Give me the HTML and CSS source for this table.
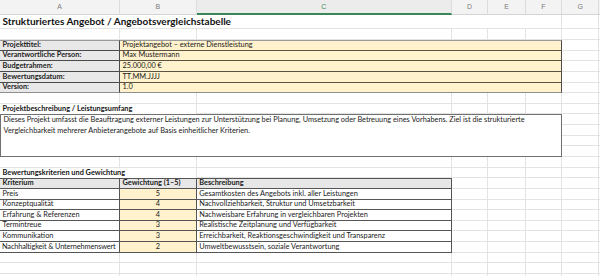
FILE: index.html
```html
<!DOCTYPE html>
<html lang="de">
<head>
<meta charset="utf-8">
<title>Angebotsvergleich</title>
<link rel="stylesheet" href="styles.css">
</head>
<body>
<div class="colhead">
  <div>A</div><div>B</div><div class="sel">C</div><div>D</div><div>E</div><div>F</div><div>G</div><div></div>
</div>
<div class="sheet">
  <!-- row 1 -->
  <div class="title span6">Strukturiertes Angebot / Angebotsvergleichstabelle</div><span></span><span></span>
  <!-- row 2 -->
  <span></span><span></span><span></span><span></span><span></span><span></span><span></span><span></span>
  <!-- row 3-7 -->
  <div class="lbl first">Projekttitel:</div><div class="val span5 first">Projektangebot – externe Dienstleistung</div><span></span><span></span>
  <div class="lbl">Verantwortliche Person:</div><div class="val span5">Max Mustermann</div><span></span><span></span>
  <div class="lbl">Budgetrahmen:</div><div class="val span5">25.000,00 €</div><span></span><span></span>
  <div class="lbl">Bewertungsdatum:</div><div class="val span5">TT.MM.JJJJ</div><span></span><span></span>
  <div class="lbl last">Version:</div><div class="val span5 last">1.0</div><span></span><span></span>
  <!-- row 8 -->
  <span></span><span></span><span></span><span></span><span></span><span></span><span></span><span></span>
  <!-- row 9 -->
  <div class="head span2">Projektbeschreibung / Leistungsumfang</div><span></span><span></span><span></span><span></span><span></span><span></span>
  <!-- rows 10-13 -->
  <div class="desc">Dieses Projekt umfasst die Beauftragung externer Leistungen zur Unterstützung bei Planung, Umsetzung oder Betreuung eines Vorhabens. Ziel ist die strukturierte<br>Vergleichbarkeit mehrerer Anbieterangebote auf Basis einheitlicher Kriterien.</div><span></span><span></span>
  <span></span><span></span>
  <span></span><span></span>
  <span></span><span></span>
  <!-- row 14 -->
  <span></span><span></span><span></span><span></span><span></span><span></span><span></span><span></span>
  <!-- row 15 -->
  <div class="head span2">Bewertungskriterien und Gewichtung</div><span></span><span></span><span></span><span></span><span></span><span></span>
  <!-- row 16 -->
  <div class="th">Kriterium</div><div class="th mid">Gewichtung (1–5)</div><div class="th end">Beschreibung</div><span></span><span></span><span></span><span></span><span></span>
  <!-- rows 17-22 -->
  <div class="td">Preis</div><div class="td w">5</div><div class="td end">Gesamtkosten des Angebots inkl. aller Leistungen</div><span></span><span></span><span></span><span></span><span></span>
  <div class="td">Konzeptqualität</div><div class="td w">4</div><div class="td end">Nachvollziehbarkeit, Struktur und Umsetzbarkeit</div><span></span><span></span><span></span><span></span><span></span>
  <div class="td">Erfahrung &amp; Referenzen</div><div class="td w">4</div><div class="td end">Nachweisbare Erfahrung in vergleichbaren Projekten</div><span></span><span></span><span></span><span></span><span></span>
  <div class="td">Termintreue</div><div class="td w">3</div><div class="td end">Realistische Zeitplanung und Verfügbarkeit</div><span></span><span></span><span></span><span></span><span></span>
  <div class="td">Kommunikation</div><div class="td w">3</div><div class="td end">Erreichbarkeit, Reaktionsgeschwindigkeit und Transparenz</div><span></span><span></span><span></span><span></span><span></span>
  <div class="td tight">Nachhaltigkeit &amp; Unternehmenswert</div><div class="td w">2</div><div class="td end">Umweltbewusstsein, soziale Verantwortung</div><span></span><span></span><span></span><span></span><span></span>
  <!-- rows 23-25 -->
  <span></span><span></span><span></span><span></span><span></span><span></span><span></span><span></span>
  <span></span><span></span><span></span><span></span><span></span><span></span><span></span><span></span>
  <span></span><span></span><span></span><span></span><span></span><span></span><span></span><span></span>
</div>
</body>
</html>
```
FILE: styles.css
```css
html, body {
  margin: 0;
  padding: 0;
  background: #ffffff;
  overflow: hidden;
}
body {
  width: 600px;
  height: 276px;
  font-family: "Lato", "Liberation Sans", sans-serif;
  font-size: 7.35px;
  color: #1a1a1a;
}
.colhead, .sheet {
  display: grid;
  grid-template-columns: 120px 76.7px 255.3px 36.3px 37.4px 36.6px 36.7px 20px;
}
.colhead {
  height: 14.5px;
  background: #f3f3f3;
}
.colhead > div {
  box-sizing: border-box;
  border-right: 1px solid #dcdcdc;
  border-bottom: 1px solid #d4d4d4;
  color: #7b7b7b;
  font-family: "Liberation Sans", sans-serif;
  font-size: 7px;
  display: flex;
  align-items: center;
  justify-content: center;
}
.colhead > div.sel {
  color: #3f8a5e;
  background: #ececec;
  border-bottom: 2px solid #3a8658;
}
.sheet {
  grid-template-rows: 14.8px;
  grid-auto-rows: 10.65px;
}
.sheet > span, .sheet > div {
  box-sizing: border-box;
  border-right: 1px solid #e3e3e3;
  border-bottom: 1px solid #e3e3e3;
  white-space: nowrap;
  overflow: hidden;
  padding: 0 2.5px;
  display: flex;
  align-items: flex-end;
  line-height: 10px;
}
.span6 { grid-column: span 6; }
.span5 { grid-column: span 5; }
.span2 { grid-column: span 2; }
.sheet > .title {
  font-weight: 700;
  font-size: 10px;
  align-items: center;
  color: #111;
}
.sheet > .lbl {
  background: #e8e8e8;
  font-weight: 700;
  color: #222;
  border-right: 1px solid #4a4a4a;
  border-bottom: 1px solid #4a4a4a;
}
.sheet > .val {
  background: #fff2cc;
  border-right: 1px solid #4a4a4a;
  border-bottom: 1px solid #5a5242;
}
.sheet > .first {
  border-top: 1.5px solid #9a9a9a;
}
.sheet > .last {
  border-bottom: 1.5px solid #8f8f8f;
}
.sheet > .head {
  font-weight: 700;
  color: #151515;
  border-bottom: none;
}
.sheet > .desc {
  grid-column: span 6;
  grid-row: span 4;
  white-space: normal;
  align-items: flex-start;
  line-height: 10.7px;
  padding-top: 0;
  border-top: 1.5px solid #707070;
  border-bottom: 1.5px solid #707070;
  border-right: 1.5px solid #707070;
  border-left: 1px solid #707070;
}
.sheet > .th {
  background: #e7e7e7;
  font-weight: 700;
  border-top: 1.5px solid #555;
  border-bottom: 1.5px solid #555;
  border-right: 1px solid #555;
}
.sheet > .td {
  border-bottom: 1.5px solid #555;
  border-right: 1px solid #555;
}
.sheet > .tight {
  padding: 0 0 0 2px;
  letter-spacing: -0.13px;
}
.sheet > .w {
  background: #fff2cc;
  justify-content: center;
}
.sheet > .th.end, .sheet > .td.end {
  border-right: 1.5px solid #555;
}
```
